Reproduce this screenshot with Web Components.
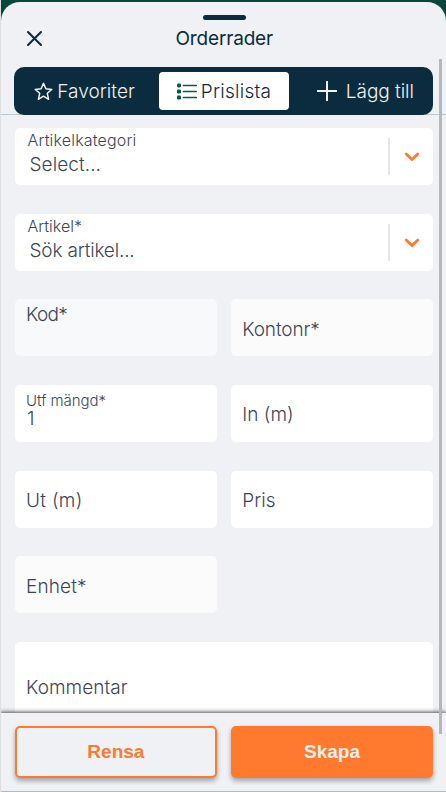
<!DOCTYPE html>
<html lang="sv">
<head>
<meta charset="utf-8">
<title>Orderrader</title>
<style>
html,body{margin:0;height:100%;overflow:hidden}
body{background:#0a473b;font-family:Inter,"Liberation Sans",sans-serif;color:#0a2c3e}
</style>
</head>
<body>
<order-sheet></order-sheet>
<script>
const define = (name, html, setup) => customElements.define(name, class extends HTMLElement {
  connectedCallback() {
    if (this.shadowRoot) return;
    const t = document.createElement('template');
    t.innerHTML = html;
    this.attachShadow({mode: 'open'}).appendChild(t.content.cloneNode(true));
    if (setup) setup(this, this.shadowRoot);
  }
});

// One line of text, tracked so that its advance equals the "w" attribute.
define('track-text', `<style>
:host{display:block;white-space:nowrap;line-height:20px;height:20px;font-size:19px;font-weight:300}
:host([size="16"]){font-size:16px}
:host([size="15"]){font-size:15px}
:host([tight]){line-height:16px;height:16px}
span{display:inline-block}
</style><span><slot></slot></span>`, (el, root) => {
  const s = root.querySelector('span');
  const w = +el.getAttribute('w');
  if (w) s.style.letterSpacing = (w - s.getBoundingClientRect().width) / el.textContent.length + 'px';
});

define('tab-item', `<style>
:host{display:flex;align-items:center;box-sizing:border-box;height:38px;color:#f3f1f1;border-radius:4px}
:host([active]){background:#fff;color:#0a2c3e}
::slotted(track-text){padding-top:2px}
</style><slot></slot>`);

define('tab-bar', `<style>
:host{display:flex;box-sizing:border-box;height:47.5px;margin:0 12.7px 0 14.3px;padding:5px 5px 0 20px;background:#0a2c3e;border-radius:10px}
</style><slot></slot>`);

define('sheet-header', `<style>
:host{display:block;height:112.5px;border-bottom:1px solid #bac7ce;box-sizing:border-box}
.grip{width:43px;height:5px;border-radius:3px;background:#0a2c3e;margin:0 auto;transform:translateX(1px)}
.top{display:grid;grid-template-columns:160.5px 1fr;height:47px;box-sizing:border-box;padding:8px 0 0 15px;align-items:start}
.top svg{margin:2px 0 0 11px;display:block}
.title{font-weight:400;margin-top:1px}
.pad{height:13px}
.prislista{width:130px;margin-left:19.5px;padding-left:18px}
.fav{width:105px}
.add{margin-left:28px}
svg{flex:none}
</style>
<div class="pad"></div><div class="grip"></div>
<div class="top"><svg width="17" height="17" viewBox="0 0 17 17"><path d="M2 2 15 15M15 2 2 15" stroke="#0a2c3e" stroke-width="2.1" stroke-linecap="round"/></svg>
<track-text class="title" w="97.5">Orderrader</track-text></div>
<tab-bar>
<tab-item class="fav"><svg width="19" height="19" viewBox="0 0 19 19"><path d="M9.5 1.3 11.9 6.8 17.8 7.4 13.3 11.3 14.6 17.3 9.5 14.2 4.4 17.3 5.7 11.3 1.2 7.4 7.1 6.8Z" fill="none" stroke="#f3f1f1" stroke-width="1.5" stroke-linejoin="round"/></svg><track-text w="77.5" style="margin-left:4px;font-weight:350">Favoriter</track-text></tab-item>
<tab-item active class="prislista"><svg width="20" height="17" viewBox="0 0 20 17"><g fill="#0a5847"><rect y=".4" width="4" height="4" rx="1.3"/><rect y="6.5" width="4" height="4" rx="1.3"/><rect y="12.6" width="4" height="4" rx="1.3"/></g><path d="M6.4 2.4H19.3M6.4 8.5H19.3M6.4 14.6H19.3" stroke="#0a5847" stroke-width="1.5" stroke-linecap="round"/></svg><track-text w="70.5" style="margin-left:4px">Prislista</track-text></tab-item>
<tab-item class="add"><svg width="20" height="20" viewBox="0 0 20 20"><path d="M10 .7V19.3M.7 10H19.3" stroke="#f3f1f1" stroke-width="2" stroke-linecap="round"/></svg><track-text w="68" style="margin-left:9px;font-weight:350">Lägg till</track-text></tab-item>
</tab-bar>`);

define('form-field', `<style>
:host{display:block;box-sizing:border-box;height:57px;background:#fff;border-radius:5px;padding:20px 0 0 11.6px;color:#3c4657}
:host([disabled]){background:#fbfbfc;padding-top:20.6px}
:host([raised]){padding-top:5.8px;background:#f8f9fb}
:host([filled]){padding-top:7.8px}
:host([tall]){height:140px;padding-top:36px}
::slotted([slot=value]){margin:2px 0 0 1px}
</style><slot></slot><slot name="value"></slot>`);

define('select-field', `<style>
:host{display:flex;box-sizing:border-box;height:57px;background:#fff;border-radius:5px;padding-left:13px;color:#3c4657}
.text{flex:1;padding-top:2.6px}
.arrow{width:45px;height:37px;margin-top:10px;border-left:2px solid #e6e6e6;box-sizing:border-box;display:flex;align-items:center;justify-content:center}
.arrow svg{margin-top:1px}
::slotted([slot=value]){margin:5px 0 0 2px}
</style><div class="text"><slot></slot><slot name="value"></slot></div>
<div class="arrow"><svg width="16" height="10" viewBox="0 0 16 10"><path d="M2.2 2 8 7.6 13.8 2" fill="none" stroke="#ff792e" stroke-width="2.8" stroke-linecap="round"/></svg></div>`);

define('order-form', `<style>
:host{display:grid;grid-template-columns:1fr 1fr;column-gap:13.4px;row-gap:28.7px;padding:13.4px 12.7px 0 14.5px;align-content:start;flex:1;min-height:0;overflow:hidden}
.wide{grid-column:1/3}
.half{grid-column:1}
</style>
<select-field class="wide"><track-text size="16" w="109">Artikelkategori</track-text><track-text slot="value" w="71.5">Select...</track-text></select-field>
<select-field class="wide"><track-text size="16" w="54.5">Artikel*</track-text><track-text slot="value" w="105">Sök artikel...</track-text></select-field>
<form-field raised><track-text w="41">Kod*</track-text></form-field>
<form-field disabled><track-text w="77.5">Kontonr*</track-text></form-field>
<form-field filled><track-text tight size="15" w="80">Utf mängd*</track-text><track-text tight slot="value">1</track-text></form-field>
<form-field><track-text w="51.5">In (m)</track-text></form-field>
<form-field><track-text w="56.5">Ut (m)</track-text></form-field>
<form-field><track-text w="33.5">Pris</track-text></form-field>
<form-field disabled class="half"><track-text w="60.5">Enhet*</track-text></form-field>
<form-field tall class="wide"><track-text w="101.5">Kommentar</track-text></form-field>`);

define('action-button', `<style>
:host{display:flex;align-items:center;justify-content:center;box-sizing:border-box;height:52px;padding-bottom:1px;border:2px solid #ff792e;border-radius:5px;background:#eff1f5;color:#ff792e;font:bold 19px/22px "Liberation Sans",Arial,sans-serif;box-shadow:0 3px 5px rgba(0,0,0,.32)}
:host([primary]){background:#ff792e;color:#f6efee}
</style><slot></slot>`);

define('action-footer', `<style>
:host{display:grid;grid-template-columns:1fr 1fr;column-gap:13.4px;box-sizing:border-box;height:79.5px;padding:13.5px 12.7px 0 14.5px;background:#eff1f5;border-bottom:1px solid #aebbc0;box-shadow:0 -1px 4px rgba(0,0,0,.7);position:relative}
</style><action-button>Rensa</action-button><action-button primary>Skapa</action-button>`);

define('order-sheet', `<style>
:host{display:flex;flex-direction:column;box-sizing:border-box;height:792px;padding-top:2px;border-left:1px solid #dedfe0;background:#0a473b;position:relative}
.sheet{display:flex;flex-direction:column;flex:1;min-height:0;background:#eff1f5;border-radius:19px 19px 0 0;overflow:hidden;margin-left:-.3px}
.sheet>*{margin-left:-.7px}
.scroll{position:absolute;right:4px;top:59px;width:3px;height:675px;background:#b5b7b8}
</style><div class="sheet"><sheet-header></sheet-header><order-form></order-form><action-footer></action-footer></div><div class="scroll"></div>`);
</script>
</body>
</html>
